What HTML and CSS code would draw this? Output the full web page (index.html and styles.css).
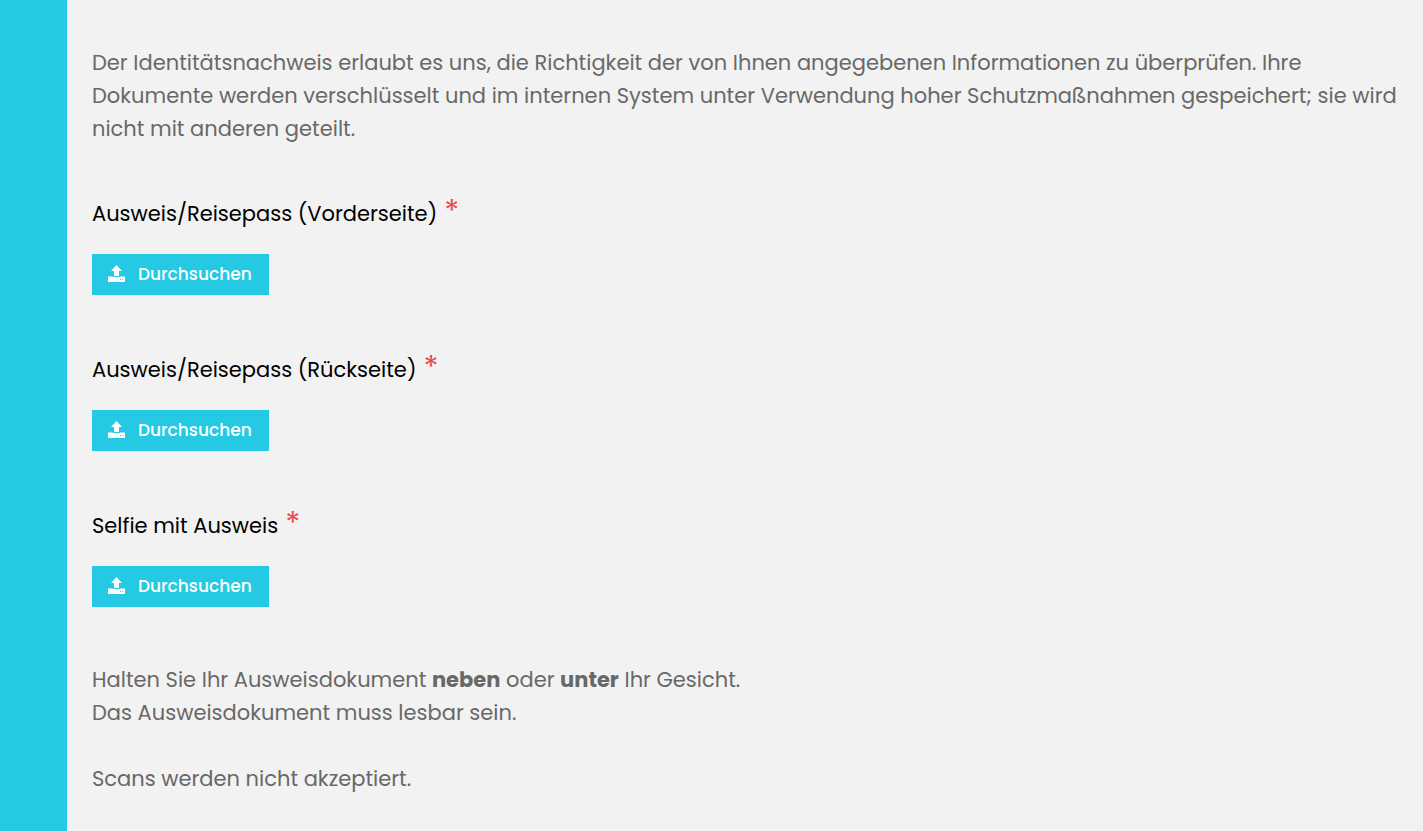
FILE: index.html
```html
<!DOCTYPE html>
<html lang="de">
<head>
    <meta charset="UTF-8">
    <meta name="viewport" content="width=device-width, initial-scale=1.0">
    <title>Identitätsnachweis</title>
    <link rel="stylesheet" href="styles.css">
</head>
<body>
    <main class="verification">
        <p class="text">Der Identitätsnachweis erlaubt es uns, die Richtigkeit der von Ihnen angegebenen Informationen zu überprüfen. Ihre Dokumente werden verschlüsselt und im internen System unter Verwendung hoher Schutzmaßnahmen gespeichert; sie wird nicht mit anderen geteilt.</p>

        <form class="uploads">
            <div class="field">
                <label class="field-label" for="id-front">Ausweis/Reisepass (Vorderseite) <span class="required">*</span></label>
                <button class="browse" id="id-front" type="button">
                    <svg class="browse-icon" viewBox="0 0 17 17" aria-hidden="true">
                        <path d="M8.500 0L14 6H11V11H6V6H3Z"/>
                        <path fill-rule="evenodd" d="M0 11.500H5V12H12V11.500H17V17H0ZM12 14V15H13V14ZM14.500 14V15H15.500V14Z"/>
                    </svg>
                    <span>Durchsuchen</span>
                </button>
            </div>

            <div class="field">
                <label class="field-label" for="id-back">Ausweis/Reisepass (Rückseite) <span class="required">*</span></label>
                <button class="browse" id="id-back" type="button">
                    <svg class="browse-icon" viewBox="0 0 17 17" aria-hidden="true">
                        <path d="M8.500 0L14 6H11V11H6V6H3Z"/>
                        <path fill-rule="evenodd" d="M0 11.500H5V12H12V11.500H17V17H0ZM12 14V15H13V14ZM14.500 14V15H15.500V14Z"/>
                    </svg>
                    <span>Durchsuchen</span>
                </button>
            </div>

            <div class="field">
                <label class="field-label" for="selfie">Selfie mit Ausweis <span class="required">*</span></label>
                <button class="browse" id="selfie" type="button">
                    <svg class="browse-icon" viewBox="0 0 17 17" aria-hidden="true">
                        <path d="M8.500 0L14 6H11V11H6V6H3Z"/>
                        <path fill-rule="evenodd" d="M0 11.500H5V12H12V11.500H17V17H0ZM12 14V15H13V14ZM14.500 14V15H15.500V14Z"/>
                    </svg>
                    <span>Durchsuchen</span>
                </button>
            </div>
        </form>

        <div class="notes">
            <p class="text">Halten Sie Ihr Ausweisdokument <strong>neben</strong> oder <strong>unter</strong> Ihr Gesicht.<br>Das Ausweisdokument muss lesbar sein.</p>
            <p class="text">Scans werden nicht akzeptiert.</p>
        </div>
    </main>
</body>
</html>
```
FILE: styles.css
```css
body {
    margin: 0;
    background-color: #f2f2f2;
    font-family: Poppins, Inter, "Liberation Sans", sans-serif;
    font-size: 21px;
    line-height: 33px;
}
.verification {
    box-sizing: border-box;
    min-height: 100vh;
    padding: 46px 24px 36px 25px;
    border-left: 67px solid #25c9e3;
}
.text {
    margin: 0;
    color: #686868;
}
.uploads {
    display: flex;
    flex-direction: column;
    gap: 58px;
    margin: 52px 0 56px;
}
.field {
    display: flex;
    flex-direction: column;
    align-items: flex-start;
    gap: 24px;
}
.field-label {
    display: flex;
    gap: 7px;
    color: #000;
}
.required {
    color: #e74c4c;
    font-size: 31px;
    line-height: 28px;
}
.browse {
    display: flex;
    align-items: center;
    gap: 13px;
    height: 41px;
    padding: 0 17px 2px 16px;
    border: 0;
    background-color: #25c9e3;
    color: #fff;
    font-family: inherit;
    font-size: 17px;
    font-weight: 500;
    cursor: pointer;
}
.browse-icon {
    width: 17px;
    height: 17px;
    fill: #fff;
}
.notes {
    display: flex;
    flex-direction: column;
    gap: 33px;
}
```
